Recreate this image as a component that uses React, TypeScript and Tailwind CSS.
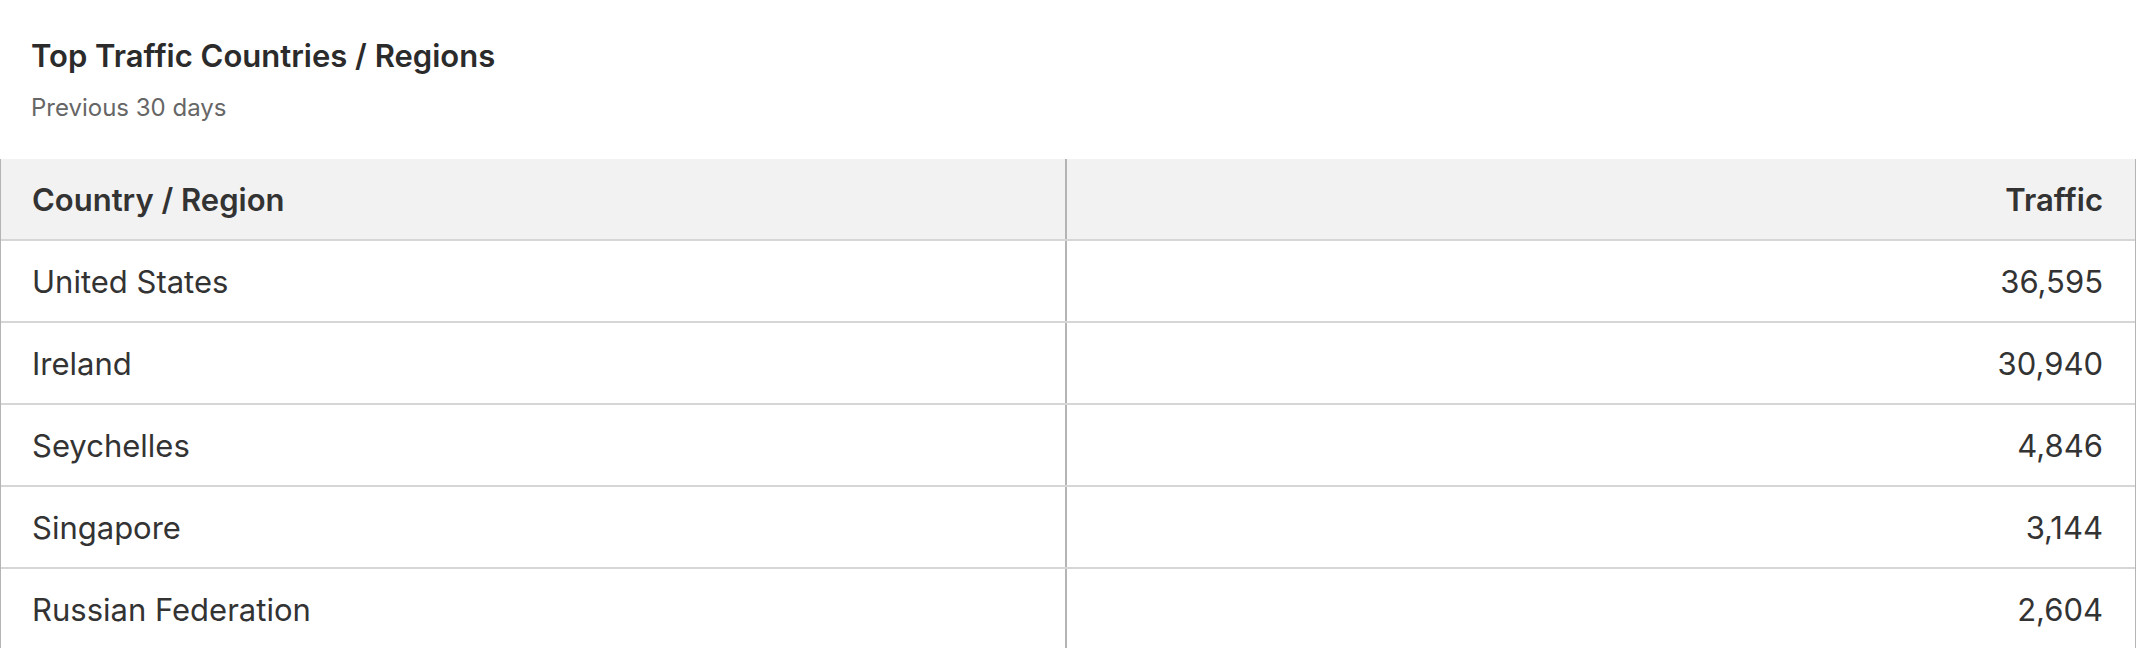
import React from "react";

const rows: [string, string][] = [
  ["United States", "36,595"],
  ["Ireland", "30,940"],
  ["Seychelles", "4,846"],
  ["Singapore", "3,144"],
  ["Russian Federation", "2,604"],
];

export default function App() {
  return (
    <div className="w-[2136px] h-[648px] overflow-hidden bg-white font-['Inter','Noto_Sans',sans-serif] text-[#333333]">
      <div className="pl-[31px] pt-[38px]">
        <h2 className="text-[31px] leading-[36px] font-semibold text-[#2b2b2b]">
          Top Traffic Countries / Regions
        </h2>
        <p className="mt-[20px] text-[24px] leading-[28px] text-[#666666]">Previous 30 days</p>
      </div>
      <div className="mt-[37px] border-x border-[#b4b4b4]">
        <div className="grid grid-cols-[1066px_1066px] h-[82px] bg-[#f2f2f2] border-b-2 border-[#d6d6d6]">
          <div className="flex items-center pl-[31px] pt-[2px] border-r-2 border-[#b4b4b4] text-[31px] font-semibold">
            Country / Region
          </div>
          <div className="flex items-center justify-end pr-[30px] pt-[2px] text-[31px] font-semibold">Traffic</div>
        </div>
        {rows.map(([c, v]) => (
          <div key={c} className="grid grid-cols-[1066px_1066px] h-[82px] border-b-2 border-[#d6d6d6]">
            <div className="flex items-center pl-[31px] pt-[2px] border-r-2 border-[#b4b4b4] text-[31px]">{c}</div>
            <div className="flex items-center justify-end pr-[30px] pt-[2px] text-[31px]">{v}</div>
          </div>
        ))}
      </div>
    </div>
  );
}
